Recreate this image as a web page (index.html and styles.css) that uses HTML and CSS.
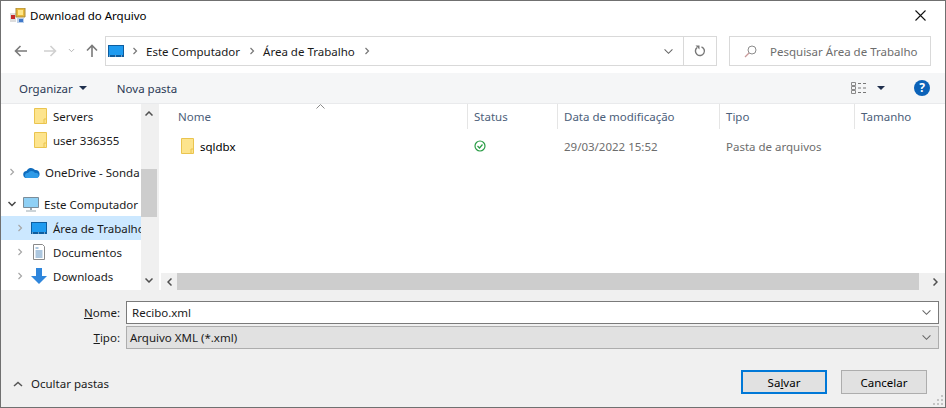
FILE: index.html
```html
<!DOCTYPE html>
<html lang="pt-BR">
<head>
    <meta charset="UTF-8">
    <title>Download do Arquivo</title>
    <link rel="stylesheet" href="styles.css">
</head>
<body>

<svg class="defs" width="0" height="0">
    <symbol id="folder" viewBox="0 0 13 16">
        <path d="M.5.5h12v15H.5z" fill="#fde48d" stroke="#eac44f"/>
        <path d="M10 15.5V11h2.5" fill="none" stroke="#eac44f"/>
    </symbol>
    <symbol id="desktop" viewBox="0 0 16 12">
        <path d="M0 0h16v12H0z" fill="#0d5d9f"/>
        <path d="M1 1h14v9H1z" fill="#1e9bf0"/>
        <path d="M1 11h14" stroke="#fff" stroke-dasharray="1 5" stroke-width=".8"/>
    </symbol>
    <symbol id="chev" viewBox="0 0 8 10">
        <path d="M2 1l4 4-4 4" fill="none" stroke="currentColor" stroke-width="1.6"/>
    </symbol>
    <symbol id="down" viewBox="0 0 12 8">
        <path d="M1.5 1.5L6 6l4.500-4.500" fill="none" stroke="currentColor" stroke-width="1.200"/>
    </symbol>
</svg>

<div class="dialog">

    <!-- Barra de titulo -->
    <div class="titlebar">
        <svg class="app-icon" width="16" height="16" viewBox="0 0 16 16">
            <path d="M0 5h6v9H0z" fill="#ddd"/>
            <path d="M1 7h4v4H1z" fill="#c62828"/>
            <path d="M6 0h9v9H6z" fill="#e8b93a" stroke="#a98b3c"/>
            <path d="M8 2h5v5H8z" fill="#fde68a"/>
            <path d="M7 10h7v5H7z" fill="#bcd0ea"/>
            <path d="M9 11h4v3H9z" fill="#3f78c9"/>
        </svg>
        <span class="title">Download do Arquivo</span>
        <svg class="close" width="11" height="11" viewBox="0 0 11 11">
            <path d="M.5.5l10 10M10.500.5l-10 10" stroke="#111" stroke-width="1.100"/>
        </svg>
    </div>

    <!-- Navegacao -->
    <div class="navbar">
        <svg class="nav-icon" width="13" height="12" viewBox="0 0 13 12">
            <path d="M13 6H2M6.500 1L1.500 6l5 5" fill="none" stroke="#7a7a7a" stroke-width="1.600"/>
        </svg>
        <svg class="nav-icon nav-forward" width="13" height="12" viewBox="0 0 13 12">
            <path d="M0 6h11M6.500 1l5 5-5 5" fill="none" stroke="#d0d0d0" stroke-width="1.600"/>
        </svg>
        <svg class="nav-recent" width="7" height="5"><use href="#down"/></svg>
        <svg class="nav-icon nav-up" width="12" height="13" viewBox="0 0 12 13">
            <path d="M6 13V2M1 6.500l5-5 5 5" fill="none" stroke="#7a7a7a" stroke-width="1.600"/>
        </svg>
        <div class="address">
            <svg class="addr-icon" width="16" height="12"><use href="#desktop"/></svg>
            <svg class="crumb-sep" width="6" height="8"><use href="#chev"/></svg>
            <span class="crumb">Este Computador</span>
            <svg class="crumb-sep" width="6" height="8"><use href="#chev"/></svg>
            <span class="crumb">Área de Trabalho</span>
            <svg class="crumb-sep" width="6" height="8"><use href="#chev"/></svg>
            <svg class="addr-down" width="11" height="7"><use href="#down"/></svg>
            <div class="refresh">
                <svg width="12" height="12" viewBox="0 0 12 12">
                    <path d="M7.500 1.800A4.500 4.500 0 1 1 3 2.600" fill="none" stroke="#777" stroke-width="1.400"/>
                    <path d="M1.500 0.500h4v4z" fill="#777"/>
                </svg>
            </div>
        </div>
        <div class="search">
            <svg width="13" height="13" viewBox="0 0 13 13">
                <circle cx="8" cy="5" r="4" fill="none" stroke="#8c8c8c"/>
                <path d="M5 8l-4 4" stroke="#c99a9a" stroke-width="1.200"/>
            </svg>
            <span>Pesquisar Área de Trabalho</span>
        </div>
    </div>

    <!-- Barra de comandos -->
    <div class="toolbar">
        <span class="tool-btn">Organizar</span>
        <span class="caret"></span>
        <span class="tool-btn new-folder">Nova pasta</span>
        <svg class="view-icon" width="16" height="12" viewBox="0 0 16 12">
            <path d="M.5.500h4v3h-4zM.5 4.500h4v3h-4zM.5 8.500h4v3h-4z" fill="none" stroke="#8a8a8a"/>
            <path d="M7 1.500h3M12 1.500h3M7 6h3M12 6h3M7 10.500h3M12 10.500h3" stroke="#777"/>
        </svg>
        <span class="caret view-caret"></span>
        <span class="help">?</span>
    </div>

    <!-- Painel principal -->
    <div class="panes">
        <div class="sidebar">
            <div class="tree">
                <div class="row row-child"><svg class="ico" width="13" height="16"><use href="#folder"/></svg>Servers</div>
                <div class="row row-child"><svg class="ico" width="13" height="16"><use href="#folder"/></svg>user 336355</div>
                <div class="row row-root row-gap">
                    <svg class="tw" width="6" height="8"><use href="#chev"/></svg>
                    <svg class="ico" width="17" height="11" viewBox="0 0 17 11">
                        <path d="M4 11a3.500 3.500 0 0 1-.5-7A5 5 0 0 1 12 3a4 4 0 0 1 1 8z" fill="#0f6cbd"/>
                        <path d="M4 11a2.500 2.500 0 0 1 1-5 4 4 0 0 1 7 0 2.500 2.500 0 0 1 2 5z" fill="#2f9be8"/>
                    </svg>
                    OneDrive - Sonda
                </div>
                <div class="row row-root row-gap">
                    <svg class="tw tw-open" width="8" height="6" viewBox="0 0 8 6"><path d="M0.500 1l3.500 3.500L7.500 1" fill="none" stroke="#444" stroke-width="1.500"/></svg>
                    <svg class="ico" width="16" height="15" viewBox="0 0 16 15">
                        <path d="M.5.500h15v10H.5z" fill="#8fd0f5" stroke="#7b8c99"/>
                        <path d="M7 11h2v2H7zM3 13.500h10v1H3z" fill="#9aa7b0"/>
                    </svg>
                    Este Computador
                </div>
                <div class="row row-sub selected">
                    <svg class="tw" width="6" height="8"><use href="#chev"/></svg>
                    <svg class="ico" width="16" height="12"><use href="#desktop"/></svg>
                    Área de Trabalho
                </div>
                <div class="row row-sub">
                    <svg class="tw" width="6" height="8"><use href="#chev"/></svg>
                    <svg class="ico" width="16" height="16" viewBox="0 0 16 16">
                        <path d="M2.500.5h9l2 2v13h-11z" fill="#fff" stroke="#8a8a8a"/>
                        <path d="M4.500 4h3M4.500 7h7M4.500 9h7M4.500 11h7M4.500 13h7" stroke="#5b8fbf"/>
                    </svg>
                    Documentos
                </div>
                <div class="row row-sub">
                    <svg class="tw" width="6" height="8"><use href="#chev"/></svg>
                    <svg class="ico" width="16" height="16" viewBox="0 0 16 16">
                        <path d="M5 0h6v8h5l-8 8-8-8h5z" fill="#2f86dc"/>
                    </svg>
                    Downloads
                </div>
            </div>
            <div class="vscroll">
                <svg class="arrow" width="8" height="5" viewBox="0 0 8 5"><path d="M.5 4.500L4 1l3.500 3.500" fill="none" stroke="#505050" stroke-width="1.500"/></svg>
                <div class="vtrack"><div class="vthumb"></div></div>
                <svg class="arrow" width="8" height="5" viewBox="0 0 8 5"><path d="M.5.500L4 4l3.500-3.500" fill="none" stroke="#505050" stroke-width="1.500"/></svg>
            </div>
        </div>

        <div class="files">
            <div class="listing">
                <div class="cols head">
                    <div class="col col-name">Nome
                        <svg class="sort" width="9" height="5" viewBox="0 0 9 5"><path d="M.5 4.500l4-4 4 4" fill="none" stroke="#8a8a8a"/></svg>
                    </div>
                    <div class="col">Status</div>
                    <div class="col">Data de modificação</div>
                    <div class="col">Tipo</div>
                    <div class="col">Tamanho</div>
                </div>
                <div class="cols item">
                    <div class="cell cell-name"><svg class="ico" width="13" height="16"><use href="#folder"/></svg>sqldbx</div>
                    <div class="cell">
                        <svg width="12" height="12" viewBox="0 0 12 12">
                            <circle cx="6" cy="6" r="5" fill="none" stroke="#2a9d46" stroke-width="1.200"/>
                            <path d="M3.500 6l2 2 3-3.500" fill="none" stroke="#2a9d46" stroke-width="1.200"/>
                        </svg>
                    </div>
                    <div class="cell cell-dim">29/03/2022 15:52</div>
                    <div class="cell cell-dim">Pasta de arquivos</div>
                    <div class="cell"></div>
                </div>
            </div>
            <div class="hscroll">
                <svg class="arrow" width="5" height="8" viewBox="0 0 5 8"><path d="M4.500.5L1 4l3.500 3.500" fill="none" stroke="#505050" stroke-width="1.500"/></svg>
                <div class="hthumb"></div>
                <svg class="arrow" width="5" height="8" viewBox="0 0 5 8"><path d="M.5.500L4 4 .5 7.500" fill="none" stroke="#505050" stroke-width="1.500"/></svg>
            </div>
        </div>
    </div>

    <!-- Nome e tipo -->
    <div class="form">
        <div class="field">
            <label class="field-label"><u>N</u>ome:</label>
            <div class="combo">
                <span>Recibo.xml</span>
                <svg width="11" height="7"><use href="#down"/></svg>
            </div>
        </div>
        <div class="field">
            <label class="field-label"><u>T</u>ipo:</label>
            <div class="combo combo-type">
                <span>Arquivo XML (*.xml)</span>
                <svg width="11" height="7"><use href="#down"/></svg>
            </div>
        </div>
    </div>

    <div class="footer">
        <div class="hide-folders">
            <svg width="10" height="6" viewBox="0 0 10 6"><path d="M1 5l4-3.500L9 5" fill="none" stroke="#555" stroke-width="1.500"/></svg>
            <span>Ocultar pastas</span>
        </div>
        <button class="btn btn-default">Sa<u>l</u>var</button>
        <button class="btn">Cancelar</button>
        <svg class="grip" width="11" height="11" viewBox="0 0 11 11">
            <path d="M8 0h2v2H8zM4 4h2v2H4zM8 4h2v2H8zM0 8h2v2H0zM4 8h2v2H4zM8 8h2v2H8z" fill="#c4c4c4"/>
        </svg>
    </div>
</div>

</body>
</html>
```

FILE: styles.css
```css
* {
    box-sizing: border-box;
}
html, body {
    margin: 0;
    padding: 0;
}
body {
    font-family: "Noto Sans", "Open Sans", sans-serif;
    font-size: 11.5px;
    color: #1a1a1a;
    background: #fff;
}
.defs {
    position: absolute;
}
svg {
    display: block;
    flex: none;
}
.dialog {
    position: relative;
    width: 946px;
    height: 408px;
    border: 1px solid #707070;
    display: flex;
    flex-direction: column;
    background: #fff;
    overflow: hidden;
}

/* titulo */
.titlebar {
    height: 29px;
    display: flex;
    align-items: center;
    padding: 0 11px 0 9px;
}
.title {
    margin-left: 4px;
    color: #000;
}
.close {
    margin-left: auto;
    margin-right: 8px;
}

/* navegacao */
.navbar {
    height: 43px;
    display: flex;
    align-items: flex-start;
    padding-top: 6px;
    position: relative;
}
.nav-icon {
    margin: 9px 0 0 13px;
}
.nav-forward {
    margin-left: 17px;
}
.nav-recent {
    margin: 12px 0 0 11px;
    color: #999;
}
.nav-up {
    margin-left: 11px;
    margin-top: 8px;
}
.address {
    margin-left: 7px;
    width: 612px;
    height: 30px;
    border: 1px solid #d9d9d9;
    display: flex;
    align-items: center;
    padding-left: 2px;
}
.addr-icon {
    margin-right: 8px;
}
.crumb {
    margin: 0 9px 0 8px;
}
.crumb-sep {
    color: #777;
}
.addr-down {
    margin-left: auto;
    margin-right: 9px;
    color: #666;
}
.refresh {
    width: 33px;
    height: 28px;
    border-left: 1px solid #d9d9d9;
    display: flex;
    align-items: center;
    justify-content: center;
}
.search {
    margin-left: 12px;
    width: 202px;
    height: 30px;
    border: 1px solid #d9d9d9;
    display: flex;
    align-items: center;
    padding-left: 14px;
    color: #6d6d6d;
}
.search span {
    margin-left: 13px;
}

/* comandos */
.toolbar {
    height: 31px;
    flex: none;
    background: #f5f6f7;
    border-bottom: 1px solid #e9eaec;
    display: flex;
    align-items: center;
    padding-left: 18px;
}
.tool-btn {
    color: #2b3a55;
}
.caret {
    width: 0;
    height: 0;
    margin-left: 6px;
    border-left: 4px solid transparent;
    border-right: 4px solid transparent;
    border-top: 4px solid #1f2f4d;
}
.new-folder {
    margin-left: 30px;
}
.view-icon {
    margin-left: auto;
}
.view-caret {
    margin-left: 10px;
}
.help {
    width: 16px;
    height: 16px;
    margin: 0 15px 0 29px;
    border-radius: 50%;
    background: #0b62b8;
    color: #fff;
    font-weight: 700;
    font-size: 12px;
    line-height: 16px;
    text-align: center;
}

/* paineis */
.panes {
    height: 186px;
    flex: none;
    display: flex;
    background: #fff;
}
.sidebar {
    width: 158px;
    flex: none;
    display: flex;
    border-right: 2px solid #f0f0f0;
}
.tree {
    width: 140px;
    flex: none;
    overflow: hidden;
}
.row {
    height: 24px;
    display: flex;
    align-items: center;
    white-space: nowrap;
}
.row-gap {
    margin-top: 8px;
}
.row-child {
    padding-left: 33px;
}
.row-root {
    padding-left: 8px;
}
.row-sub {
    padding-left: 16px;
}
.selected {
    background: #cce8ff;
}
.tw {
    color: #a6a6a6;
    margin-right: 8px;
}
.tw-open {
    margin-left: -1px;
    margin-right: 7px;
}
.ico {
    margin-right: 6px;
}
.row-root .ico {
    margin-right: 5px;
}
.vscroll {
    width: 16px;
    flex: none;
    background: #f0f0f0;
    display: flex;
    flex-direction: column;
    align-items: center;
    padding: 7px 0;
}
.vtrack {
    flex: 1;
    width: 100%;
    padding-top: 53px;
}
.vthumb {
    height: 48px;
    background: #cdcdcd;
}

/* lista */
.files {
    flex: 1;
    min-width: 0;
    display: flex;
    flex-direction: column;
}
.listing {
    flex: 1;
}
.cols {
    display: grid;
    grid-template-columns: 308px 90px 162px 135px 1fr;
}
.head {
    height: 25px;
    color: #4c607a;
}
.col {
    position: relative;
    padding-left: 6px;
    line-height: 25px;
    border-left: 1px solid #e5e5e5;
}
.col-name {
    padding-left: 19px;
    border-left: none;
}
.sort {
    position: absolute;
    left: 157px;
    top: 0;
}
.item {
    height: 22px;
    margin-top: 6px;
}
.cell {
    display: flex;
    align-items: center;
    padding-left: 7px;
}
.cell-name {
    padding-left: 22px;
    color: #000;
}
.cell-dim {
    color: #6d6d6d;
}
.hscroll {
    height: 17px;
    margin-left: 2px;
    background: #f0f0f0;
    display: flex;
    align-items: center;
    padding: 0 7px 0 6px;
}
.hthumb {
    flex: 1;
    height: 100%;
    margin: 0 14px 0 5px;
    background: #cdcdcd;
}

/* nome e tipo */
.form {
    flex: none;
    background: #f0f0f0;
    padding: 11px 6px 0 0;
}
.field {
    display: flex;
    align-items: center;
    height: 23px;
    margin-bottom: 2px;
}
.field-label {
    width: 119px;
    text-align: right;
    margin-right: 6px;
}
.combo {
    flex: 1;
    height: 23px;
    background: #fff;
    border: 1px solid #7a7a7a;
    display: flex;
    align-items: center;
    justify-content: space-between;
    padding: 0 6px 0 5px;
}
.combo svg {
    color: #666;
}
.combo-type {
    background: #e1e1e1;
    border-color: #adadad;
    padding-left: 3px;
}
.footer {
    flex: 1;
    position: relative;
    background: #f0f0f0;
    display: flex;
    align-items: flex-start;
    padding: 19px 18px 0 12px;
}
.hide-folders {
    display: flex;
    align-items: center;
    margin-right: auto;
    margin-top: 6px;
    color: #1a1a1a;
}
.hide-folders span {
    margin-left: 8px;
}
.btn {
    width: 86px;
    height: 24px;
    margin-left: 14px;
    padding: 0;
    background: #e1e1e1;
    border: 1px solid #adadad;
    font: inherit;
    color: #000;
}
.btn-default {
    border: 2px solid #0078d7;
}
.grip {
    position: absolute;
    right: 1px;
    bottom: 1px;
}
```
